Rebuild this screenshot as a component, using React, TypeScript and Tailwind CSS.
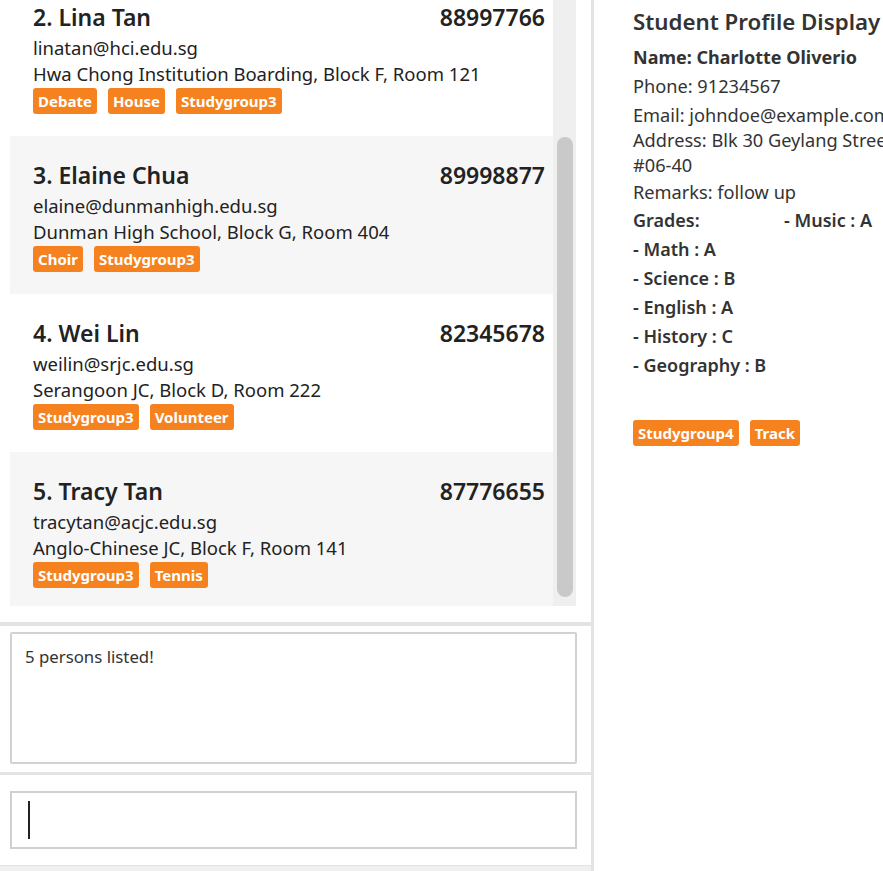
const persons = [
  {
    idx: 2,
    name: "Lina Tan",
    phone: "88997766",
    email: "linatan@hci.edu.sg",
    address: "Hwa Chong Institution Boarding, Block F, Room 121",
    tags: ["Debate", "House", "Studygroup3"],
  },
  {
    idx: 3,
    name: "Elaine Chua",
    phone: "89998877",
    email: "elaine@dunmanhigh.edu.sg",
    address: "Dunman High School, Block G, Room 404",
    tags: ["Choir", "Studygroup3"],
  },
  {
    idx: 4,
    name: "Wei Lin",
    phone: "82345678",
    email: "weilin@srjc.edu.sg",
    address: "Serangoon JC, Block D, Room 222",
    tags: ["Studygroup3", "Volunteer"],
  },
  {
    idx: 5,
    name: "Tracy Tan",
    phone: "87776655",
    email: "tracytan@acjc.edu.sg",
    address: "Anglo-Chinese JC, Block F, Room 141",
    tags: ["Studygroup3", "Tennis"],
  },
];

const grades = ["Math : A", "Science : B", "English : A", "History : C", "Geography : B", "Music : A"];

function Tag({ label }: { label: string }) {
  return (
    <span className="h-[26px] px-[5px] flex items-center rounded-[3px] bg-[#f5821f] text-white text-[15px] font-bold">
      {label}
    </span>
  );
}

function PersonCard({ p, i }: { p: (typeof persons)[number]; i: number }) {
  return (
    <div className={`h-[158px] shrink-0 pl-[23px] pr-[8px] pt-[24px] ${i % 2 === 0 ? "bg-white" : "bg-[#f6f6f6]"}`}>
      <div className="flex justify-between items-center h-[30px] text-[23px] font-semibold text-[#222]">
        <span>
          {p.idx}. {p.name}
        </span>
        <span>{p.phone}</span>
      </div>
      <div className="mt-[3px] text-[18.5px] leading-[26px] text-[#222]">{p.email}</div>
      <div className="text-[18.5px] leading-[26px] text-[#222]">{p.address}</div>
      <div className="flex gap-[11px] mt-[1px]">
        {p.tags.map((t) => (
          <Tag key={t} label={t} />
        ))}
      </div>
    </div>
  );
}

export default function App() {
  return (
    <div className="w-[883px] h-[871px] overflow-hidden bg-white flex font-['Segoe_UI','Noto_Sans',sans-serif] text-[#222]">
      {/* left side */}
      <div className="w-[591px] shrink-0 flex flex-col">
        <div className="h-[622px] shrink-0 pl-[10px] pr-[15px]">
          <div className="h-[606px] flex">
            <div className="flex-1 overflow-hidden flex flex-col">
              <div className="-mt-[22px] flex flex-col">
                {persons.map((p, i) => (
                  <PersonCard key={p.idx} p={p} i={i} />
                ))}
              </div>
            </div>
            <div className="w-[23px] bg-[#efefef] pt-[137px] pl-[4px]">
              <div className="w-[16px] h-[460px] rounded-full bg-[#c9c9c9]" />
            </div>
          </div>
        </div>
        <div className="h-[4px] bg-[#e3e3e3]" />
        <div className="h-[146px] shrink-0 pt-[6px] pl-[10px] pr-[14px]">
          <div className="h-[132px] border-2 border-[#d2d2d2] rounded-[2px] px-[13px] pt-[10px] text-[16.8px] text-[#333]">
            5 persons listed!
          </div>
        </div>
        <div className="h-[3px] bg-[#e3e3e3]" />
        <div className="h-[90px] shrink-0 pt-[16px] pl-[10px] pr-[14px]">
          <div className="h-[58px] border-2 border-[#d0d0d0] flex items-center pl-[16px]">
            <div className="w-[2px] h-[38px] bg-[#222]" />
          </div>
        </div>
        <div className="flex-1 bg-[#f0f0f0] border-t border-[#e3e3e3]" />
      </div>
      <div className="w-[3px] shrink-0 bg-[#e3e3e3]" />
      {/* right side */}
      <div className="flex-1 pl-[39px] pt-[8px] whitespace-nowrap text-[#333]">
        <div className="text-[22.3px] font-semibold leading-[28px]">Student Profile Display</div>
        <div className="mt-[9px] text-[18px] font-bold leading-[24px]">Name: Charlotte Oliverio</div>
        <div className="text-[18.2px] leading-[25px]">
          <div className="mt-[5px]">Phone: 91234567</div>
          <div className="mt-[4px]">Email: johndoe@example.com</div>
          <div>Address: Blk 30 Geylang Street 29,</div>
          <div>#06-40</div>
          <div className="mt-[2px]">Remarks: follow up</div>
        </div>
        <div className="mt-[1px] grid grid-flow-col grid-rows-6 auto-cols-[151px] text-[18px] font-semibold leading-[29px]">
          <div>Grades:</div>
          {grades.map((g) => (
            <div key={g}>- {g}</div>
          ))}
        </div>
        <div className="flex gap-[11px] mt-[40px]">
          <Tag label="Studygroup4" />
          <Tag label="Track" />
        </div>
      </div>
    </div>
  );
}
